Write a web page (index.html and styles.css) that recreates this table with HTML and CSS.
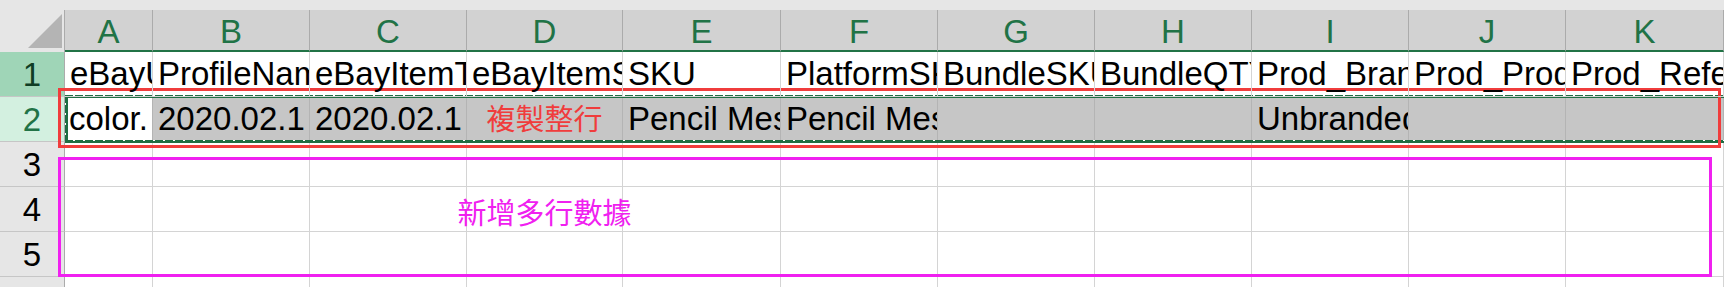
FILE: index.html
```html
<!DOCTYPE html>
<html lang="zh-Hant">
<head>
<meta charset="utf-8">
<title>Sheet</title>
<link rel="stylesheet" href="styles.css">
</head>
<body>
<div class="sheet">
  <div class="topband"></div>
  <div class="grid">
    <div class="corner"><svg class="tri" width="34" height="34" viewBox="0 0 34 34"><polygon points="34,0 34,34 0,34" fill="#b4b4b4"/></svg></div>
    <div class="ch">A</div><div class="ch">B</div><div class="ch">C</div><div class="ch">D</div><div class="ch">E</div><div class="ch">F</div><div class="ch">G</div><div class="ch">H</div><div class="ch">I</div><div class="ch">J</div><div class="ch">K</div>

    <div class="rh rh-dark">1</div>
    <div class="c top">eBayUserID</div><div class="c top">ProfileName</div><div class="c top">eBayItemTitle</div><div class="c top">eBayItemSubtitle</div><div class="c top">SKU</div><div class="c top">PlatformSKU</div><div class="c top">BundleSKU</div><div class="c top">BundleQTY</div><div class="c top">Prod_Brand</div><div class="c top">Prod_Product</div><div class="c top">Prod_Reference</div>

    <div class="rh rh-sel">2</div>
    <div class="c sel active">color.</div><div class="c sel">2020.02.1</div><div class="c sel">2020.02.1</div><div class="c sel note-red">複製整行</div><div class="c sel">Pencil Messenger</div><div class="c sel">Pencil Messenger</div><div class="c sel"></div><div class="c sel"></div><div class="c sel">Unbranded</div><div class="c sel"></div><div class="c sel"></div>

    <div class="rh">3</div>
    <div class="c"></div><div class="c"></div><div class="c"></div><div class="c"></div><div class="c"></div><div class="c"></div><div class="c"></div><div class="c"></div><div class="c"></div><div class="c"></div><div class="c"></div>

    <div class="rh">4</div>
    <div class="c"></div><div class="c"></div><div class="c"></div><div class="c note-mag"><span>新增多行數據</span></div><div class="c"></div><div class="c"></div><div class="c"></div><div class="c"></div><div class="c"></div><div class="c"></div><div class="c"></div>

    <div class="rh">5</div>
    <div class="c"></div><div class="c"></div><div class="c"></div><div class="c"></div><div class="c"></div><div class="c"></div><div class="c"></div><div class="c"></div><div class="c"></div><div class="c"></div><div class="c"></div>

    <div class="rh">6</div>
    <div class="c"></div><div class="c"></div><div class="c"></div><div class="c"></div><div class="c"></div><div class="c"></div><div class="c"></div><div class="c"></div><div class="c"></div><div class="c"></div><div class="c"></div>
  </div>

  <div class="ants"></div>
  <div class="box box-red"></div>
  <div class="box box-mag"></div>
</div>
</body>
</html>
```
FILE: styles.css
```css
html, body {
  margin: 0;
  padding: 0;
  background: #ffffff;
}
body {
  width: 1724px;
  height: 287px;
  overflow: hidden;
  font-family: "Liberation Sans", Arial, sans-serif;
}
.sheet {
  position: relative;
  width: 1724px;
  height: 287px;
  overflow: hidden;
}
.topband {
  height: 10px;
  background: #e6e6e6;
}
.grid {
  display: grid;
  grid-template-columns: 65px 88px 157px 157px 156px 158px 157px 157px 157px 157px 157px 158px;
  grid-template-rows: 42px repeat(6, 45px);
}
.corner {
  background: #e6e6e6;
  border-right: 1px solid #ababab;
  box-sizing: border-box;
  display: flex;
  justify-content: flex-end;
  align-items: flex-end;
  padding: 0 2px 4px 0;
}
.tri { display: block; }
.ch {
  background: #d2d2d2;
  border-right: 1px solid #ababab;
  border-bottom: 2px solid #217346;
  box-sizing: border-box;
  color: #217346;
  font-size: 33px;
  line-height: 44px;
  text-align: center;
  overflow: hidden;
}
.rh {
  background: #e6e6e6;
  border-right: 1px solid #ababab;
  border-bottom: 1px solid #c6c6c6;
  box-sizing: border-box;
  color: #000;
  font-size: 33px;
  line-height: 46px;
  text-align: center;
  overflow: hidden;
}
.rh-dark { background: #9fd5b7; color: #0f3d24; }
.rh-sel { background: #d3f0e0; color: #217346; }
.c {
  border-right: 1px solid #d4d4d4;
  border-bottom: 1px solid #d4d4d4;
  box-sizing: border-box;
  color: #000;
  font-size: 33px;
  line-height: 44px;
  padding-left: 5px;
  white-space: nowrap;
  overflow: hidden;
}
.c.top {
  position: relative;
  z-index: 3;
}
.sel {
  background: #c6c6c6;
  border-right-color: #b4b4b4;
}
.sel.active { background: #ffffff; padding-left: 4px; }
.note-red {
  color: #f03c3c;
  font-family: "Noto Sans CJK TC", "Noto Sans CJK SC", sans-serif;
  font-size: 29px;
  line-height: 41px;
  text-align: center;
  padding-left: 0;
}
.note-mag {
  overflow: visible;
  display: flex;
  justify-content: center;
  padding-left: 0;
  color: #f020f0;
  font-family: "Noto Sans CJK TC", "Noto Sans CJK SC", sans-serif;
  font-size: 29px;
  line-height: 48px;
}
.note-mag span { white-space: nowrap; }
.ants {
  position: absolute;
  left: 65px;
  top: 95px;
  width: 1664px;
  height: 48px;
  box-sizing: border-box;
  border: 3px solid #1f6e43;
}
.ants::before {
  content: "";
  position: absolute;
  inset: -3px;
  background:
    repeating-linear-gradient(90deg, transparent 0 8px, #ffffff 8px 10px) left 0 top 0 / 100% 1px no-repeat,
    repeating-linear-gradient(90deg, transparent 0 8px, #ffffff 8px 10px) left 0 bottom 2px / 100% 1px no-repeat,
    repeating-linear-gradient(180deg, transparent 0 8px, #ffffff 8px 10px) left 0 top 0 / 1px 100% no-repeat;
}
.box {
  position: absolute;
  box-sizing: border-box;
  border: 3px solid;
}
.box-red {
  left: 58px;
  top: 88px;
  width: 1663px;
  height: 60px;
  border-color: #f03c3c;
}
.box-mag {
  left: 58px;
  top: 157px;
  width: 1654px;
  height: 120px;
  border-color: #f020f0;
}
```
